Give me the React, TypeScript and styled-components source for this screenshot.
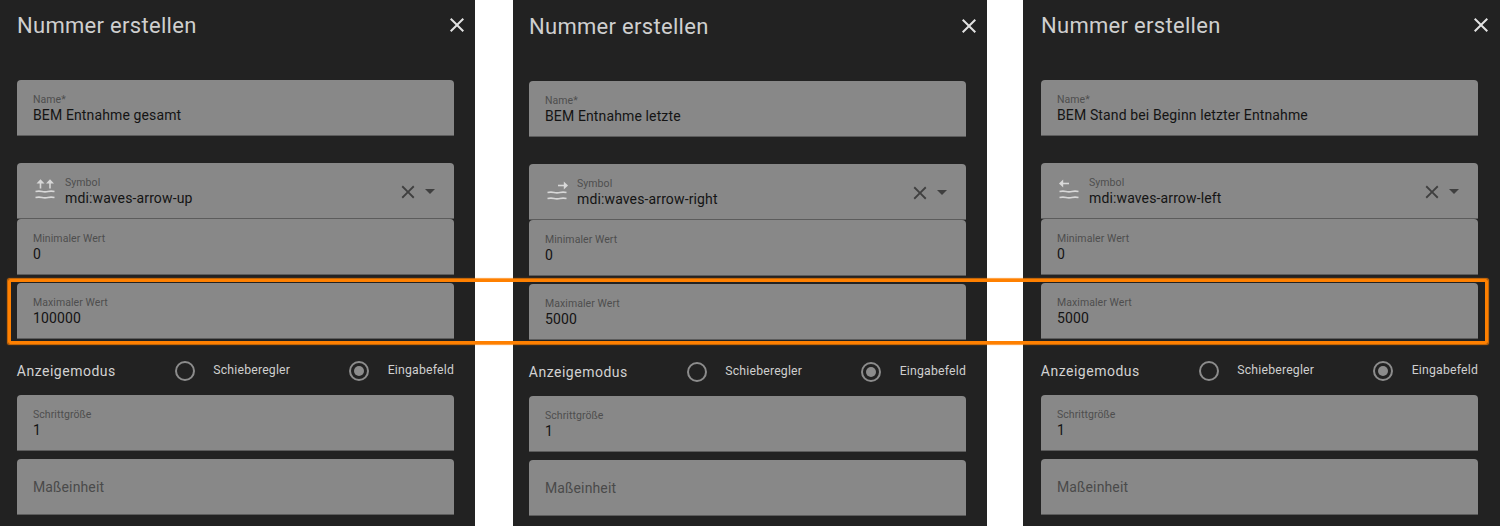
import React from 'react';
import styled, { createGlobalStyle } from 'styled-components';

const GlobalStyle = createGlobalStyle`
  html, body {
    margin: 0;
    padding: 0;
    background: #fff;
    overflow: hidden;
  }
`;

type Direction = 'up' | 'right' | 'left';

interface Dialog {
  name: string;
  icon: Direction;
  max: string;
  width: number;
  gap: number;
  drop: number;
  inset: number;
}

const dialogs: Dialog[] = [
  { name: 'BEM Entnahme gesamt', icon: 'up', max: '100000', width: 475, gap: 0, drop: 0, inset: 17 },
  { name: 'BEM Entnahme letzte', icon: 'right', max: '5000', width: 474, gap: 38, drop: 1, inset: 16 },
  { name: 'BEM Stand bei Beginn letzter Entnahme', icon: 'left', max: '5000', width: 477, gap: 36, drop: 0, inset: 18 },
];

function WavesIcon({ direction }: { direction: Direction }) {
  return (
    <IconSvg viewBox="0 0 24 26">
      {direction === 'up' && (
        <>
          <path d="M7.500 10.500V4.500M17 10.500V4.500" stroke="#d8d8d8" strokeWidth="1.600" fill="none" />
          <path d="M3.500 5.600L7.500 1.300L11.500 5.600ZM13 5.600L17 1.300L21 5.600Z" fill="#d8d8d8" />
        </>
      )}
      {direction === 'right' && (
        <>
          <path d="M13 6.500H20" stroke="#d8d8d8" strokeWidth="1.600" fill="none" />
          <path d="M18.800 2.500L23 6.500L18.800 10.500Z" fill="#d8d8d8" />
        </>
      )}
      {direction === 'left' && (
        <>
          <path d="M5 5.500H12" stroke="#d8d8d8" strokeWidth="1.600" fill="none" />
          <path d="M6.200 1.500L2 5.500L6.200 9.500Z" fill="#d8d8d8" />
        </>
      )}
      <path
        d="M2.500 13.500c2.500-.5 4.500-.5 6.500 0s4 .5 6 0s4-.5 6.500 0M2.500 19.500c2.500-.5 4.500-.5 6.500 0s4 .5 6 0s4-.5 6.500 0"
        stroke="#d8d8d8"
        strokeWidth="1.600"
        fill="none"
      />
    </IconSvg>
  );
}

function TextField({ label, value }: { label: string; value: string }) {
  return (
    <Field>
      <FieldText>
        <FieldLabel>{label}</FieldLabel>
        <FieldValue>{value}</FieldValue>
      </FieldText>
    </Field>
  );
}

function NumberDialog({ dialog }: { dialog: Dialog }) {
  return (
    <Panel $width={dialog.width} $gap={dialog.gap} $drop={dialog.drop} $inset={dialog.inset}>
      <Header>
        <Title>Nummer erstellen</Title>
        <CloseIcon viewBox="0 0 24 24">
          <path d="M19 6.410L17.590 5L12 10.590L6.410 5L5 6.410L10.590 12L5 17.590L6.410 19L12 13.410L17.590 19L19 17.590L13.410 12Z" />
        </CloseIcon>
      </Header>
      <TextField label="Name*" value={dialog.name} />
      <SymbolField>
        <WavesIcon direction={dialog.icon} />
        <FieldText>
          <FieldLabel>Symbol</FieldLabel>
          <FieldValue>mdi:waves-arrow-{dialog.icon}</FieldValue>
        </FieldText>
        <FieldActions>
          <ClearIcon viewBox="0 0 24 24">
            <path d="M19 6.410L17.590 5L12 10.590L6.410 5L5 6.410L10.590 12L5 17.590L6.410 19L12 13.410L17.590 19L19 17.590L13.410 12Z" />
          </ClearIcon>
          <Caret />
        </FieldActions>
      </SymbolField>
      <TextField label="Minimaler Wert" value="0" />
      <SpacedField>
        <TextField label="Maximaler Wert" value={dialog.max} />
      </SpacedField>
      <ModeRow>
        <ModeLabel>Anzeigemodus</ModeLabel>
        <RadioOption>
          <RadioCircle $checked={false} />
          <RadioText>Schieberegler</RadioText>
        </RadioOption>
        <RadioOption>
          <RadioCircle $checked />
          <RadioText>Eingabefeld</RadioText>
        </RadioOption>
      </ModeRow>
      <TextField label="Schrittgröße" value="1" />
      <SpacedField>
        <Field>
          <Placeholder>Maßeinheit</Placeholder>
        </Field>
      </SpacedField>
    </Panel>
  );
}

export default function App() {
  return (
    <>
      <GlobalStyle />
      <Page>
        {dialogs.map(dialog => (
          <NumberDialog key={dialog.icon} dialog={dialog} />
        ))}
        <Highlight />
      </Page>
    </>
  );
}

const Page = styled.div`
  position: relative;
  display: flex;
  width: 1500px;
  height: 526px;
  overflow: hidden;
  background: #fff;
  font-family: Roboto, "Liberation Sans", sans-serif;
`;

const Panel = styled.div<{ $width: number; $gap: number; $drop: number; $inset: number }>`
  display: flex;
  flex-direction: column;
  flex: none;
  box-sizing: border-box;
  width: ${p => p.$width}px;
  height: 526px;
  margin-left: ${p => p.$gap}px;
  padding: ${p => p.$drop}px ${p => p.$width - p.$inset - 437}px 0 ${p => p.$inset}px;
  background: #222;
`;

const Header = styled.div`
  display: flex;
  align-items: center;
  justify-content: space-between;
  height: 50px;
  margin-bottom: 30px;
`;

const Title = styled.div`
  font-size: 22px;
  color: #cfcfcf;
  letter-spacing: 0.3px;
`;

const CloseIcon = styled.svg`
  width: 24px;
  height: 24px;
  margin-right: -15px;
  fill: #e2e2e2;
`;

const Field = styled.div`
  display: flex;
  align-items: center;
  box-sizing: border-box;
  height: 56px;
  padding: 0 16px;
  background: #888;
  border-radius: 4px 4px 0 0;
  border-bottom: 1px solid #5c5c5c;
`;

const SymbolField = styled(Field)`
  margin-top: 27px;
`;

const SpacedField = styled.div`
  margin-top: 8px;
`;

const FieldText = styled.div`
  display: flex;
  flex-direction: column;
  padding-top: 2px;
`;

const FieldLabel = styled.div`
  font-size: 10.500px;
  line-height: 13px;
  color: #4e4e4e;
  letter-spacing: 0.07px;
`;

const FieldValue = styled.div`
  font-size: 14px;
  line-height: 18px;
  color: #141414;
  letter-spacing: 0.13px;
`;

const Placeholder = styled.div`
  font-size: 14px;
  color: #4a4a4a;
  letter-spacing: 0.13px;
`;

const IconSvg = styled.svg`
  flex: none;
  width: 24px;
  height: 26px;
  margin-right: 8px;
`;

const FieldActions = styled.div`
  display: flex;
  align-items: center;
  margin-left: auto;
  padding-top: 1px;
  gap: 6px;
`;

const ClearIcon = styled.svg`
  width: 22px;
  height: 22px;
  margin-top: 2px;
  fill: #3f3f3f;
`;

const Caret = styled.div`
  width: 0;
  height: 0;
  margin-right: 3px;
  border-left: 5px solid transparent;
  border-right: 5px solid transparent;
  border-top: 5px solid #3f3f3f;
`;

const ModeRow = styled.div`
  display: flex;
  align-items: center;
  justify-content: flex-end;
  box-sizing: border-box;
  height: 56px;
  padding-top: 8px;
  gap: 59px;
`;

const ModeLabel = styled.div`
  margin-right: auto;
  font-size: 14px;
  color: #d2d2d2;
  letter-spacing: 0.5px;
`;

const RadioOption = styled.div`
  display: flex;
  align-items: center;
  gap: 18.500px;
`;

const RadioCircle = styled.div<{ $checked: boolean }>`
  position: relative;
  box-sizing: border-box;
  width: 20px;
  height: 20px;
  border: 2px solid #8c8c8c;
  border-radius: 50%;

  ${p => p.$checked && `
    &::after {
      content: '';
      position: absolute;
      inset: 3px;
      border-radius: 50%;
      background: #8c8c8c;
    }
  `}
`;

const RadioText = styled.div`
  font-size: 12.250px;
  color: #cfcfcf;
  letter-spacing: 0.2px;
  padding-bottom: 3px;
`;

const Highlight = styled.div`
  position: absolute;
  left: 8px;
  top: 279px;
  width: 1480px;
  height: 65px;
  box-sizing: border-box;
  border: 3px solid #ff8000;
  border-radius: 2px;
  box-shadow: 0 0 1px 0.5px rgba(255, 128, 0, 0.8);
`;
